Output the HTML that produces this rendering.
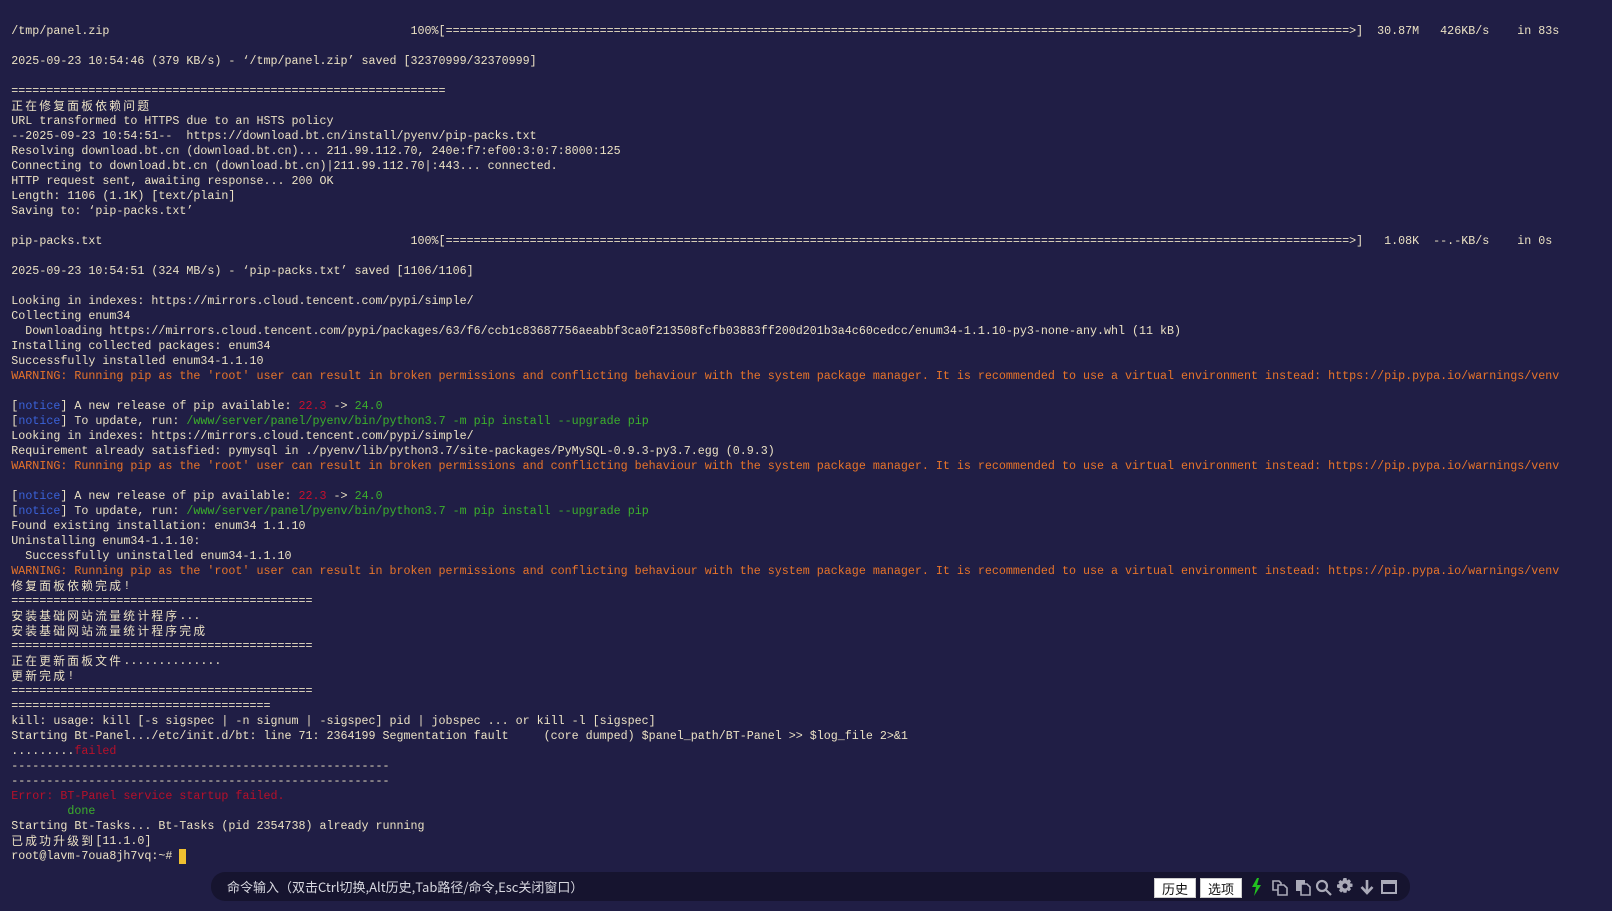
<!DOCTYPE html>
<html><head><meta charset="utf-8">
<style>
html,body{margin:0;padding:0;}
body{width:1612px;height:911px;background:#201e45;overflow:hidden;position:relative;}
pre{position:absolute;left:11.3px;top:23.8px;margin:0;font-family:"Liberation Mono","Noto Sans CJK SC",monospace;font-size:11.68px;line-height:15px;color:#ece2c4;white-space:pre;}
.c{display:inline-block;height:15px;line-height:15px;vertical-align:top;position:relative;top:-1px;overflow:visible;letter-spacing:2.33px;font-family:"Noto Sans CJK SC","WenQuanYi Zen Hei",sans-serif;font-size:11.68px;}
.w{color:#e8742a}.n{color:#3a62d8}.r{color:#c8102e}.g{color:#3cb02c}.e{color:#b8102a}
.cur{display:inline-block;width:7px;height:15px;background:#f0c030;vertical-align:top;}
.bar{position:absolute;left:211px;top:872px;width:1199px;height:29px;background:#16142f;border-radius:14px;}
.bar .t{position:absolute;left:16px;top:0;line-height:29px;font-family:"Noto Sans CJK SC","Liberation Sans",sans-serif;font-size:13px;color:#d8d8e0;}
.btn{position:absolute;top:6px;height:20px;width:42px;background:#fff;color:#111;font-family:"Noto Sans CJK SC",sans-serif;font-size:13px;line-height:20px;text-align:center;box-sizing:border-box;border:1px solid #ccc;}
svg{position:absolute;}
</style></head><body>
<pre>/tmp/panel.zip                                           100%[<span id="b1"></span>>]  30.87M   426KB/s    in 83s

2025-09-23 10:54:46 (379 KB/s) - ‘/tmp/panel.zip’ saved [32370999/32370999]

==============================================================
<span class="c">正在修复面板依赖问题</span>
URL transformed to HTTPS due to an HSTS policy
--2025-09-23 10:54:51--  https://download.bt.cn/install/pyenv/pip-packs.txt
Resolving download.bt.cn (download.bt.cn)... 211.99.112.70, 240e:f7:ef00:3:0:7:8000:125
Connecting to download.bt.cn (download.bt.cn)|211.99.112.70|:443... connected.
HTTP request sent, awaiting response... 200 OK
Length: 1106 (1.1K) [text/plain]
Saving to: ‘pip-packs.txt’

pip-packs.txt                                            100%[<span id="b2"></span>>]   1.08K  --.-KB/s    in 0s

2025-09-23 10:54:51 (324 MB/s) - ‘pip-packs.txt’ saved [1106/1106]

Looking in indexes: https://mirrors.cloud.tencent.com/pypi/simple/
Collecting enum34
  Downloading https://mirrors.cloud.tencent.com/pypi/packages/63/f6/ccb1c83687756aeabbf3ca0f213508fcfb03883ff200d201b3a4c60cedcc/enum34-1.1.10-py3-none-any.whl (11 kB)
Installing collected packages: enum34
Successfully installed enum34-1.1.10
<span class="w">WARNING: Running pip as the 'root' user can result in broken permissions and conflicting behaviour with the system package manager. It is recommended to use a virtual environment instead: https://pip.pypa.io/warnings/venv</span>

[<span class="n">notice</span>] A new release of pip available: <span class="r">22.3</span> -&gt; <span class="g">24.0</span>
[<span class="n">notice</span>] To update, run: <span class="g">/www/server/panel/pyenv/bin/python3.7 -m pip install --upgrade pip</span>
Looking in indexes: https://mirrors.cloud.tencent.com/pypi/simple/
Requirement already satisfied: pymysql in ./pyenv/lib/python3.7/site-packages/PyMySQL-0.9.3-py3.7.egg (0.9.3)
<span class="w">WARNING: Running pip as the 'root' user can result in broken permissions and conflicting behaviour with the system package manager. It is recommended to use a virtual environment instead: https://pip.pypa.io/warnings/venv</span>

[<span class="n">notice</span>] A new release of pip available: <span class="r">22.3</span> -&gt; <span class="g">24.0</span>
[<span class="n">notice</span>] To update, run: <span class="g">/www/server/panel/pyenv/bin/python3.7 -m pip install --upgrade pip</span>
Found existing installation: enum34 1.1.10
Uninstalling enum34-1.1.10:
  Successfully uninstalled enum34-1.1.10
<span class="w">WARNING: Running pip as the 'root' user can result in broken permissions and conflicting behaviour with the system package manager. It is recommended to use a virtual environment instead: https://pip.pypa.io/warnings/venv</span>
<span class="c">修复面板依赖完成</span>!
===========================================
<span class="c">安装基础网站流量统计程序</span>...
<span class="c">安装基础网站流量统计程序完成</span>
===========================================
<span class="c">正在更新面板文件</span>..............
<span class="c">更新完成</span>!
===========================================
=====================================
kill: usage: kill [-s sigspec | -n signum | -sigspec] pid | jobspec ... or kill -l [sigspec]
Starting Bt-Panel.../etc/init.d/bt: line 71: 2364199 Segmentation fault     (core dumped) $panel_path/BT-Panel &gt;&gt; $log_file 2&gt;&amp;1
.........<span class="e">failed</span>
------------------------------------------------------
------------------------------------------------------
<span class="e">Error: BT-Panel service startup failed.</span>
        <span class="g">done</span>
Starting Bt-Tasks... Bt-Tasks (pid 2354738) already running
<span class="c">已成功升级到</span>[11.1.0]
root@lavm-7oua8jh7vq:~# <span class="cur"></span></pre>
<div class="bar">
<div class="t">命令输入（双击Ctrl切换,Alt历史,Tab路径/命令,Esc关闭窗口）</div>
<div class="btn" style="left:943px">历史</div>
<div class="btn" style="left:989px">选项</div>
<svg style="left:1039px;top:6px" width="12" height="18" viewBox="0 0 12 18"><path d="M7 0L2 9h4l-2 9 7-11H7l2-7z" fill="#22c020"/></svg>
<svg style="left:1060px;top:6px" width="18" height="18" viewBox="0 0 18 18" fill="none" stroke="#aaaab8" stroke-width="1.6"><path d="M2 3h6l2 2v7H2z"/><path d="M7 7h6l3 3v7H7z" fill="#16142f"/></svg>
<svg style="left:1083px;top:6px" width="18" height="18" viewBox="0 0 18 18"><rect x="2" y="2" width="9" height="11" fill="#aaaab8"/><path d="M7 6h6l3 3v8H7z" fill="#16142f" stroke="#aaaab8" stroke-width="1.6"/></svg>
<svg style="left:1104px;top:7px" width="17" height="17" viewBox="0 0 17 17" fill="none" stroke="#aaaab8" stroke-width="2.2"><circle cx="7" cy="7" r="5"/><path d="M11 11l5 5"/></svg>
<svg style="left:1126px;top:6px" width="16" height="16" viewBox="0 0 16 16"><path d="M6.5 0h3l.5 2.5 2-1.2 2 2-1.2 2 2.7.5v3l-2.7.5 1.2 2-2 2-2-1.2-.5 2.7h-3L6 13.3l-2 1.2-2-2 1.2-2L0 9.5v-3l2.5-.5-1.2-2 2-2 2 1.2z" fill="#aaaab8"/><circle cx="8" cy="8" r="2.5" fill="#16142f"/></svg>
<svg style="left:1149px;top:7px" width="14" height="16" viewBox="0 0 14 16"><path d="M7 1v12M1.5 8L7 14l5.5-6" fill="none" stroke="#aaaab8" stroke-width="2.6"/></svg>
<svg style="left:1170px;top:8px" width="16" height="14" viewBox="0 0 16 14"><rect x="1" y="1" width="14" height="12" fill="none" stroke="#aaaab8" stroke-width="2"/><rect x="1" y="1" width="14" height="3" fill="#aaaab8"/></svg>
</div>
<script>
var s='='.repeat(129);
document.getElementById('b1').textContent=s;
document.getElementById('b2').textContent=s;
</script>
</body></html>
